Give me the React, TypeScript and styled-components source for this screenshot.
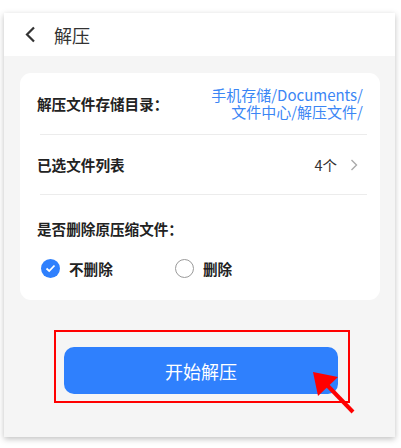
import React, { useState } from "react";
import styled, { createGlobalStyle } from "styled-components";

const Global = createGlobalStyle`
  html, body {
    margin: 0;
    padding: 0;
    background: #ffffff;
    font-family: "Noto Sans CJK SC", "Noto Sans", sans-serif;
  }
`;

const Stage = styled.div`
  position: relative;
  width: 401px;
  height: 448px;
  padding: 13px 6px 0 4px;
  box-sizing: border-box;
`;

const Phone = styled.div`
  width: 391px;
  height: 424px;
  background: #f5f5f5;
  box-shadow: 0 2px 6px rgba(0, 0, 0, 0.25);
  display: flex;
  flex-direction: column;
`;

const Header = styled.div`
  height: 43px;
  background: #ffffff;
  display: flex;
  align-items: center;
  padding-left: 20px;
  gap: 17px;
  color: #333;
  font-size: 18px;
`;

const Body = styled.div`
  padding: 17px 15px 0 16px;
  display: flex;
  flex-direction: column;
`;

const Card = styled.div`
  background: #ffffff;
  border-radius: 11px;
  display: flex;
  flex-direction: column;
`;

const Row = styled.div<{ $h: number }>`
  height: ${(p) => p.$h}px;
  display: flex;
  align-items: center;
  justify-content: space-between;
  padding: 0 17px;
`;

const Label = styled.span`
  font-size: 14.6px;
  font-weight: 600;
  color: #222;
`;

const Path = styled.span`
  font-size: 15px;
  line-height: 17px;
  color: #3b86f5;
  text-align: right;
  margin-top: -2px;
`;

const Divider = styled.div`
  height: 1px;
  background: #ececec;
  margin: 0 13px 0 20px;
`;

const Count = styled.span`
  display: flex;
  align-items: center;
  gap: 13px;
  font-size: 14.5px;
  color: #333;
  margin-right: 5px;
`;

const Section = styled.div`
  padding: 23px 17px 21px 17px;
  display: flex;
  flex-direction: column;
  gap: 19px;
`;

const Options = styled.div`
  display: flex;
  align-items: center;
  padding-left: 4px;
`;

const Option = styled.div<{ $w: number }>`
  width: ${(p) => p.$w}px;
  display: flex;
  align-items: center;
  gap: 9px;
  cursor: pointer;
`;

const Dot = styled.span<{ $on: boolean }>`
  width: 19px;
  height: 19px;
  border-radius: 50%;
  box-sizing: border-box;
  background: ${(p) => (p.$on ? "#2f80fd" : "#fff")};
  border: ${(p) => (p.$on ? "none" : "1.5px solid #9a9a9a")};
  display: flex;
  align-items: center;
  justify-content: center;
`;

const Footer = styled.div`
  padding: 30px 0 0 50px;
`;

const Mark = styled.div`
  width: 296px;
  height: 73px;
  box-sizing: border-box;
  border: 2px solid #ff0000;
  padding: 15px 10px 0 8px;
`;

const StartButton = styled.button`
  width: 274px;
  height: 47px;
  border: none;
  border-radius: 10px;
  background: #2f80fd;
  color: #fff;
  font-family: inherit;
  font-size: 18px;
  cursor: pointer;
`;

const Arrow = styled.svg`
  position: absolute;
  left: 0;
  top: 0;
  pointer-events: none;
`;

export default function App() {
  const [keep, setKeep] = useState(true);

  return (
    <Stage>
      <Global />
      <Phone>
        <Header>
          <svg width="13" height="17" viewBox="0 0 13 17">
            <path d="M10 1.5 L3 8.5 L10 15.5" fill="none" stroke="#333" strokeWidth="2.2" />
          </svg>
          <span>解压</span>
        </Header>
        <Body>
          <Card>
            <Row $h={61}>
              <Label>解压文件存储目录：</Label>
              <Path>
                手机存储/Documents/
                <br />
                文件中心/解压文件/
              </Path>
            </Row>
            <Divider />
            <Row $h={59}>
              <Label>已选文件列表</Label>
              <Count>
                4个
                <svg width="8" height="12" viewBox="0 0 8 12">
                  <path d="M1.5 1 L6.5 6 L1.5 11" fill="none" stroke="#aaa" strokeWidth="1.4" />
                </svg>
              </Count>
            </Row>
            <Divider />
            <Section>
              <Label>是否删除原压缩文件：</Label>
              <Options>
                <Option $w={134} onClick={() => setKeep(true)}>
                  <Dot $on={keep}>
                    {keep && (
                      <svg width="11" height="9" viewBox="0 0 11 9">
                        <path d="M1.5 4.5 L4.2 7 L9.5 1.5" fill="none" stroke="#fff" strokeWidth="1.8" />
                      </svg>
                    )}
                  </Dot>
                  <Label>不删除</Label>
                </Option>
                <Option $w={80} onClick={() => setKeep(false)}>
                  <Dot $on={!keep}>
                    {!keep && (
                      <svg width="11" height="9" viewBox="0 0 11 9">
                        <path d="M1.5 4.5 L4.2 7 L9.5 1.5" fill="none" stroke="#fff" strokeWidth="1.8" />
                      </svg>
                    )}
                  </Dot>
                  <Label>删除</Label>
                </Option>
              </Options>
            </Section>
          </Card>
        </Body>
        <Footer>
          <Mark>
            <StartButton>开始解压</StartButton>
          </Mark>
        </Footer>
      </Phone>
      <Arrow width="401" height="448" viewBox="0 0 401 448">
        <line x1="353" y1="412" x2="326" y2="384" stroke="#ff0000" strokeWidth="4" />
        <polygon points="313,372 338,377 318,396" fill="#ff0000" />
      </Arrow>
    </Stage>
  );
}
